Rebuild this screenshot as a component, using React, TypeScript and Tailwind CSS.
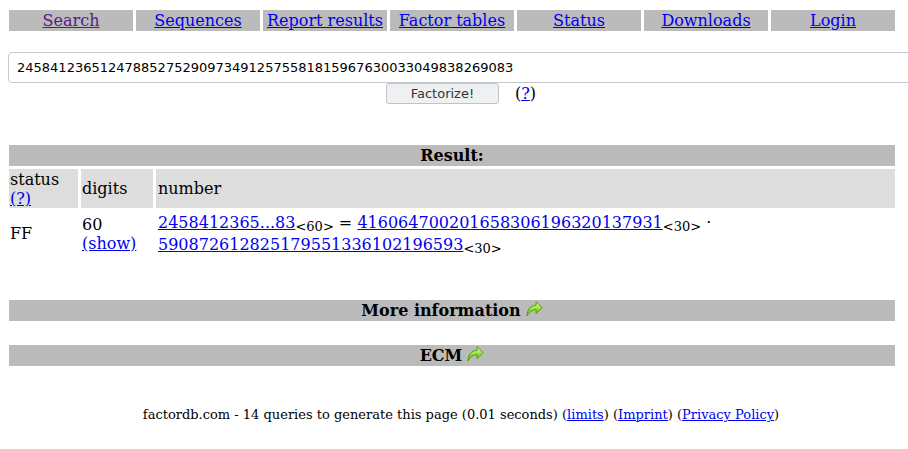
import React from 'react'

const serif = { fontFamily: '"DejaVu Serif", serif' }
const sans = { fontFamily: '"DejaVu Sans", sans-serif' }

const navItems = [
  'Search',
  'Sequences',
  'Report results',
  'Factor tables',
  'Status',
  'Downloads',
  'Login',
]

const GoArrow: React.FC = () => (
  <svg width="17" height="17" viewBox="0 0 16 16" className="inline-block align-[-1px]">
    <defs>
      <linearGradient id="ga" x1="0" y1="0" x2="0" y2="1">
        <stop offset="0" stopColor="#e2fbaa" />
        <stop offset="0.45" stopColor="#9be53f" />
        <stop offset="1" stopColor="#60b010" />
      </linearGradient>
    </defs>
    <path
      d="M1 15 C1 8.5 4.5 5 9.5 5 V1.5 L15.2 7.2 L9.5 12.8 V9.2 C6 9.2 3 11 1 15 Z"
      fill="url(#ga)"
      stroke="#4e9a06"
      strokeWidth="0.9"
      strokeLinejoin="round"
    />
  </svg>
)

const Bar: React.FC<{ children: React.ReactNode }> = ({ children }) => (
  <div className="flex h-[21px] items-center justify-center bg-[#bbbbbb] pt-[1px] text-[16px] font-bold text-black">
    {children}
  </div>
)

const Sub: React.FC<{ n: number }> = ({ n }) => (
  <sub className="text-[13px]">&lt;{n}&gt;</sub>
)

export default function App() {
  return (
    <div className="h-[449px] w-[908px] overflow-hidden bg-white text-black" style={serif}>
      {/* top navigation */}
      <div className="ml-[9px] mt-[10px] grid w-[886px] grid-cols-7 gap-[3px] text-[16px]">
        {navItems.map((item, i) => (
          <div key={item} className="flex h-[21px] items-center justify-center bg-[#bbbbbb]">
            <a href="#" className={i === 0 ? 'text-[#551a8b] underline' : 'text-[#0000ee] underline'}>
              {item}
            </a>
          </div>
        ))}
      </div>

      {/* search form */}
      <div className="ml-[8px] mt-[21px] w-[1000px]">
        <input
          readOnly
          value="245841236512478852752909734912575581815967630033049838269083"
          className="h-[31px] w-full rounded-[4px] border border-[#c6c9cf] px-[8px] text-[13px] text-black outline-none"
          style={sans}
        />
      </div>
      <div className="ml-[8px] flex h-[21px] w-[906px] items-center justify-center gap-[16px]">
        <button
          className="h-[21px] w-[113px] rounded-[3px] border border-[#bfc2c7] bg-[#eff0f1] text-[13px] text-[#333]"
          style={sans}
        >
          Factorize!
        </button>
        <span className="text-[16px] leading-[21px]">
          (<a href="#" className="text-[#0000ee] underline">?</a>)
        </span>
      </div>

      {/* result table */}
      <div className="ml-[9px] mt-[41px] w-[886px]">
        <Bar>Result:</Bar>
        <div className="mt-[3px] grid grid-cols-[69px_72px_1fr] gap-x-[3px] gap-y-[3px] text-[16px]">
          <div className="h-[39px] bg-[#dddddd] pl-[1px] pt-[1px] leading-[19px]">
            status
            <br />
            <a href="#" className="text-[#0000ee] underline">(?)</a>
          </div>
          <div className="flex h-[39px] items-center bg-[#dddddd] pl-[1px]">digits</div>
          <div className="flex h-[39px] items-center bg-[#dddddd] pl-[2px]">number</div>

          <div className="flex h-[45px] items-center pl-[1px] pt-[1px]">FF</div>
          <div className="flex h-[45px] flex-col justify-center pl-[1px] pt-[1px] leading-[19px]">
            <span>60</span>
            <a href="#" className="text-[#0000ee] underline">(show)</a>
          </div>
          <div className="pl-[2px] pt-[1px] leading-[22px]">
            <a href="#" className="text-[#0000ee] underline">2458412365...83</a>
            <Sub n={60} /> ={' '}
            <a href="#" className="text-[#0000ee] underline">416064700201658306196320137931</a>
            <Sub n={30} /> ·{' '}
            <br />
            <a href="#" className="text-[#0000ee] underline">590872612825179551336102196593</a>
            <Sub n={30} />
          </div>
        </div>
      </div>

      {/* collapsible sections */}
      <div className="ml-[9px] mt-[44px] w-[886px]">
        <Bar>
          <span>More information</span>
          <span className="ml-[5px]">
            <GoArrow />
          </span>
        </Bar>
      </div>
      <div className="ml-[9px] mt-[24px] w-[886px]">
        <Bar>
          <span>ECM</span>
          <span className="ml-[5px]">
            <GoArrow />
          </span>
        </Bar>
      </div>

      {/* footer */}
      <div className="ml-[8px] mt-[39px] w-[906px] text-center text-[13px]" style={serif}>
        factordb.com - 14 queries to generate this page (0.01 seconds) (
        <a href="#" className="text-[#0000ee] underline">limits</a>) (
        <a href="#" className="text-[#0000ee] underline">Imprint</a>) (
        <a href="#" className="text-[#0000ee] underline">Privacy Policy</a>)
      </div>
    </div>
  )
}
